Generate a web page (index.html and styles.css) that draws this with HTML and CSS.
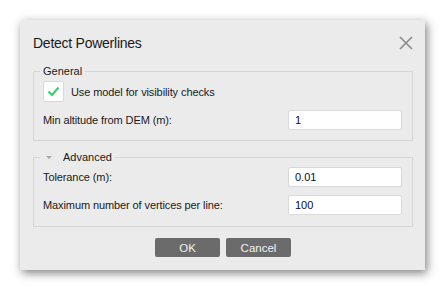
FILE: index.html
```html
<!DOCTYPE html>
<html>
<head>
<meta charset="utf-8">
<link rel="stylesheet" href="styles.css">
</head>
<body>
<div class="dialog">
  <div class="titlebar">
    <span class="title">Detect Powerlines</span>
    <svg class="close" width="14" height="14" viewBox="0 0 14 14"><path d="M1 1L13 13M13 1L1 13" stroke="#8a8a8a" stroke-width="1.6" fill="none"/></svg>
  </div>
  <fieldset class="group general">
    <legend>General</legend>
    <div class="row check-row">
      <span class="checkbox"><svg width="13" height="11" viewBox="0 0 13 11"><path d="M1.5 5.5L5 9L11.5 1.5" stroke="#35cc6a" stroke-width="2" fill="none"/></svg></span>
      <span class="label">Use model for visibility checks</span>
    </div>
    <div class="row field">
      <span class="label">Min altitude from DEM (m):</span>
      <span class="input">1</span>
    </div>
  </fieldset>
  <fieldset class="group advanced">
    <legend><span class="tri"></span>Advanced</legend>
    <div class="row field">
      <span class="label">Tolerance (m):</span>
      <span class="input">0.01</span>
    </div>
    <div class="row field">
      <span class="label">Maximum number of vertices per line:</span>
      <span class="input">100</span>
    </div>
  </fieldset>
  <div class="buttons">
    <span class="btn">OK</span>
    <span class="btn">Cancel</span>
  </div>
</div>
</body>
</html>
```
FILE: styles.css
```css
html, body {
  margin: 0;
  padding: 0;
  background: #ffffff;
}
body {
  padding: 20px 0 0 20px;
  height: 290px;
  box-sizing: border-box;
  font-family: "Liberation Sans", Arial, sans-serif;
  font-size: 11px;
  color: #111;
}
.dialog {
  width: 405px;
  height: 250px;
  box-sizing: border-box;
  background: #ebebeb;
  box-shadow: 2px 3px 9px rgba(0,0,0,0.5);
  padding: 0 12px 0 13px;
  display: flex;
  flex-direction: column;
}
.titlebar {
  height: 44px;
  display: flex;
  align-items: center;
  justify-content: space-between;
  padding-top: 1px;
  box-sizing: border-box;
}
.title {
  font-size: 14px;
  letter-spacing: -0.25px;
  color: #1a1a1a;
}
.close {
  display: block;
  margin-top: 1px;
}
.group {
  margin: 0;
  border: 1px solid #d6d6d6;
  padding: 0 10px 0 6px;
  min-width: 0;
}
.group legend {
  padding: 0 3px;
  font-size: 11px;
  color: #1a1a1a;
  line-height: 14px;
  display: flex;
  align-items: center;
}
.general {
  height: 77px;
  box-sizing: border-box;
}
.advanced {
  margin-top: 9px;
  height: 77px;
  box-sizing: border-box;
}
.row {
  display: flex;
  align-items: center;
  padding-left: 3px;
}
.check-row {
  margin-top: 3px;
  height: 21px;
}
.checkbox {
  width: 19px;
  height: 19px;
  background: #fff;
  border: 1px solid #d9d9d9;
  border-radius: 2px;
  display: flex;
  align-items: center;
  justify-content: center;
  margin-right: 7px;
}
.field {
  justify-content: space-between;
  height: 20px;
}
.general .field { margin-top: 8px; }
.advanced .field:first-of-type { margin-top: 3px; }
.advanced .field + .field { margin-top: 8px; }
.label {
  color: #1a1a1a;
  letter-spacing: -0.1px;
}
.input {
  width: 114px;
  height: 20px;
  box-sizing: border-box;
  background: #fff;
  border: 1px solid #d9d9d9;
  border-radius: 2px;
  padding-left: 6px;
  display: flex;
  align-items: center;
  color: #0a0a30;
}
.tri {
  width: 0;
  height: 0;
  border-left: 3px solid transparent;
  border-right: 3px solid transparent;
  border-top: 3px solid #a8a8a8;
  margin: 0 11px 0 3px;
}
.buttons {
  display: flex;
  justify-content: center;
  gap: 6px;
  margin-top: 11px;
}
.btn {
  width: 65px;
  height: 19px;
  background: #6b6b6b;
  border-radius: 2px;
  color: #f2f2f2;
  font-size: 11.5px;
  display: flex;
  align-items: center;
  justify-content: center;
}
```
